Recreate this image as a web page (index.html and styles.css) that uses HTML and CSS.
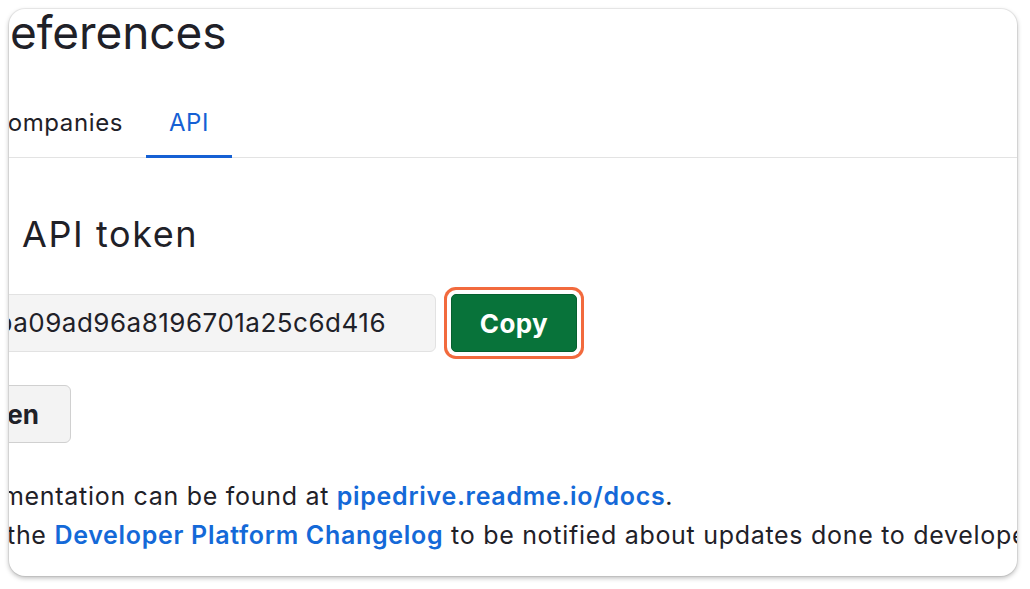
FILE: index.html
```html
<!DOCTYPE html>
<html>
<head>
<meta charset="utf-8">
<link rel="stylesheet" href="styles.css">
</head>
<body>
<div class="card">
  <h1 class="title">eferences</h1>
  <nav class="tabs">
    <div class="tab tab-first">Companies</div>
    <div class="tab tab-active">API</div>
  </nav>
  <section class="section">
    <h2 class="heading">API token</h2>
    <div class="token-row">
      <div class="token-field">ba09ad96a8196701a25c6d416</div>
      <button class="copy-btn">Copy</button>
    </div>
    <button class="regen-btn">en</button>
    <p class="line line-1">mentation can be found at <a class="link" href="#">pipedrive.readme.io/docs</a>.</p>
    <p class="line line-2">the <a class="link" href="#">Developer Platform Changelog</a> to be notified about updates done to developer platform</p>
  </section>
</div>
</body>
</html>
```

FILE: styles.css
```css
* { box-sizing: border-box; }
html, body { margin: 0; padding: 0; background: #ffffff; }
body {
  font-family: Inter, "Noto Sans", sans-serif;
  color: #1f2128;
  width: 1030px;
  height: 589px;
  overflow: hidden;
}
.card {
  margin: 9px 0 0 9px;
  width: 1008px;
  height: 567px;
  border-radius: 16px;
  background: #fff;
  overflow: hidden;
  box-shadow: 0 0 0 1px rgba(0,0,0,0.06), 0 2px 5px rgba(0,0,0,0.28);
}
.title {
  margin: 0;
  padding: 1px 0 0 1px;
  font-size: 46px;
  line-height: 44px;
  font-weight: 400;
  letter-spacing: -0.1px;
  white-space: nowrap;
}
.tabs {
  display: flex;
  margin-top: 56px;
  border-bottom: 1px solid #e3e3e3;
}
.tab {
  font-size: 24px;
  line-height: 26px;
  letter-spacing: 0.6px;
  padding: 0 23px 19px;
  border-bottom: 3px solid transparent;
  margin-bottom: -1px;
  white-space: nowrap;
}
.tab-first {
  width: 206px;
  margin-left: -69px;
  text-align: right;
  flex: none;
}
.tab-active {
  color: #1560d4;
  border-bottom-color: #1560d4;
  width: 86px;
  padding: 0 0 19px;
  text-align: center;
}
.section {
  display: flex;
  flex-direction: column;
  align-items: flex-start;
}
.heading {
  margin: 0;
  margin-top: 56px;
  padding-left: 13px;
  font-size: 36px;
  line-height: 40px;
  letter-spacing: 1.6px;
  font-weight: 400;
}
.token-row {
  display: flex;
  align-items: center;
  margin-top: 40px;
}
.token-field {
  margin-left: -40px;
  width: 467px;
  height: 58px;
  background: #f4f4f4;
  border: 1px solid #e2e2e2;
  border-radius: 6px;
  font-size: 26px;
  letter-spacing: 0.5px;
  line-height: 56px;
  text-align: right;
  padding-right: 49px;
  white-space: nowrap;
  overflow: hidden;
}
.copy-btn {
  margin-left: 15px;
  width: 126px;
  height: 58px;
  border: 1px solid #06602f;
  border-radius: 5px;
  background: #08733a;
  color: #fff;
  font-family: Inter, "Noto Sans", sans-serif;
  font-size: 26px;
  letter-spacing: 0.4px;
  font-weight: 700;
  box-shadow: 0 0 0 4px #fff, 0 0 0 7px #f26a3d;
}
.regen-btn {
  margin-top: 33px;
  margin-left: -30px;
  height: 58px;
  width: 92px;
  padding: 0 31px 0 0;
  text-align: right;
  background: #f3f3f3;
  border: 1px solid #d0d0d0;
  border-radius: 6px;
  font-family: Inter, "Noto Sans", sans-serif;
  font-size: 26px;
  font-weight: 700;
  color: #1f2128;
}
.line {
  margin: 0;
  font-size: 25px;
  letter-spacing: 0.7px;
  line-height: 39px;
  white-space: nowrap;
}
.line-1 { margin-top: 34px; text-indent: -7px; }
.line-2 { text-indent: -2px; }
.link {
  color: #1469d8;
  text-decoration: none;
  font-weight: 600;
}
```
